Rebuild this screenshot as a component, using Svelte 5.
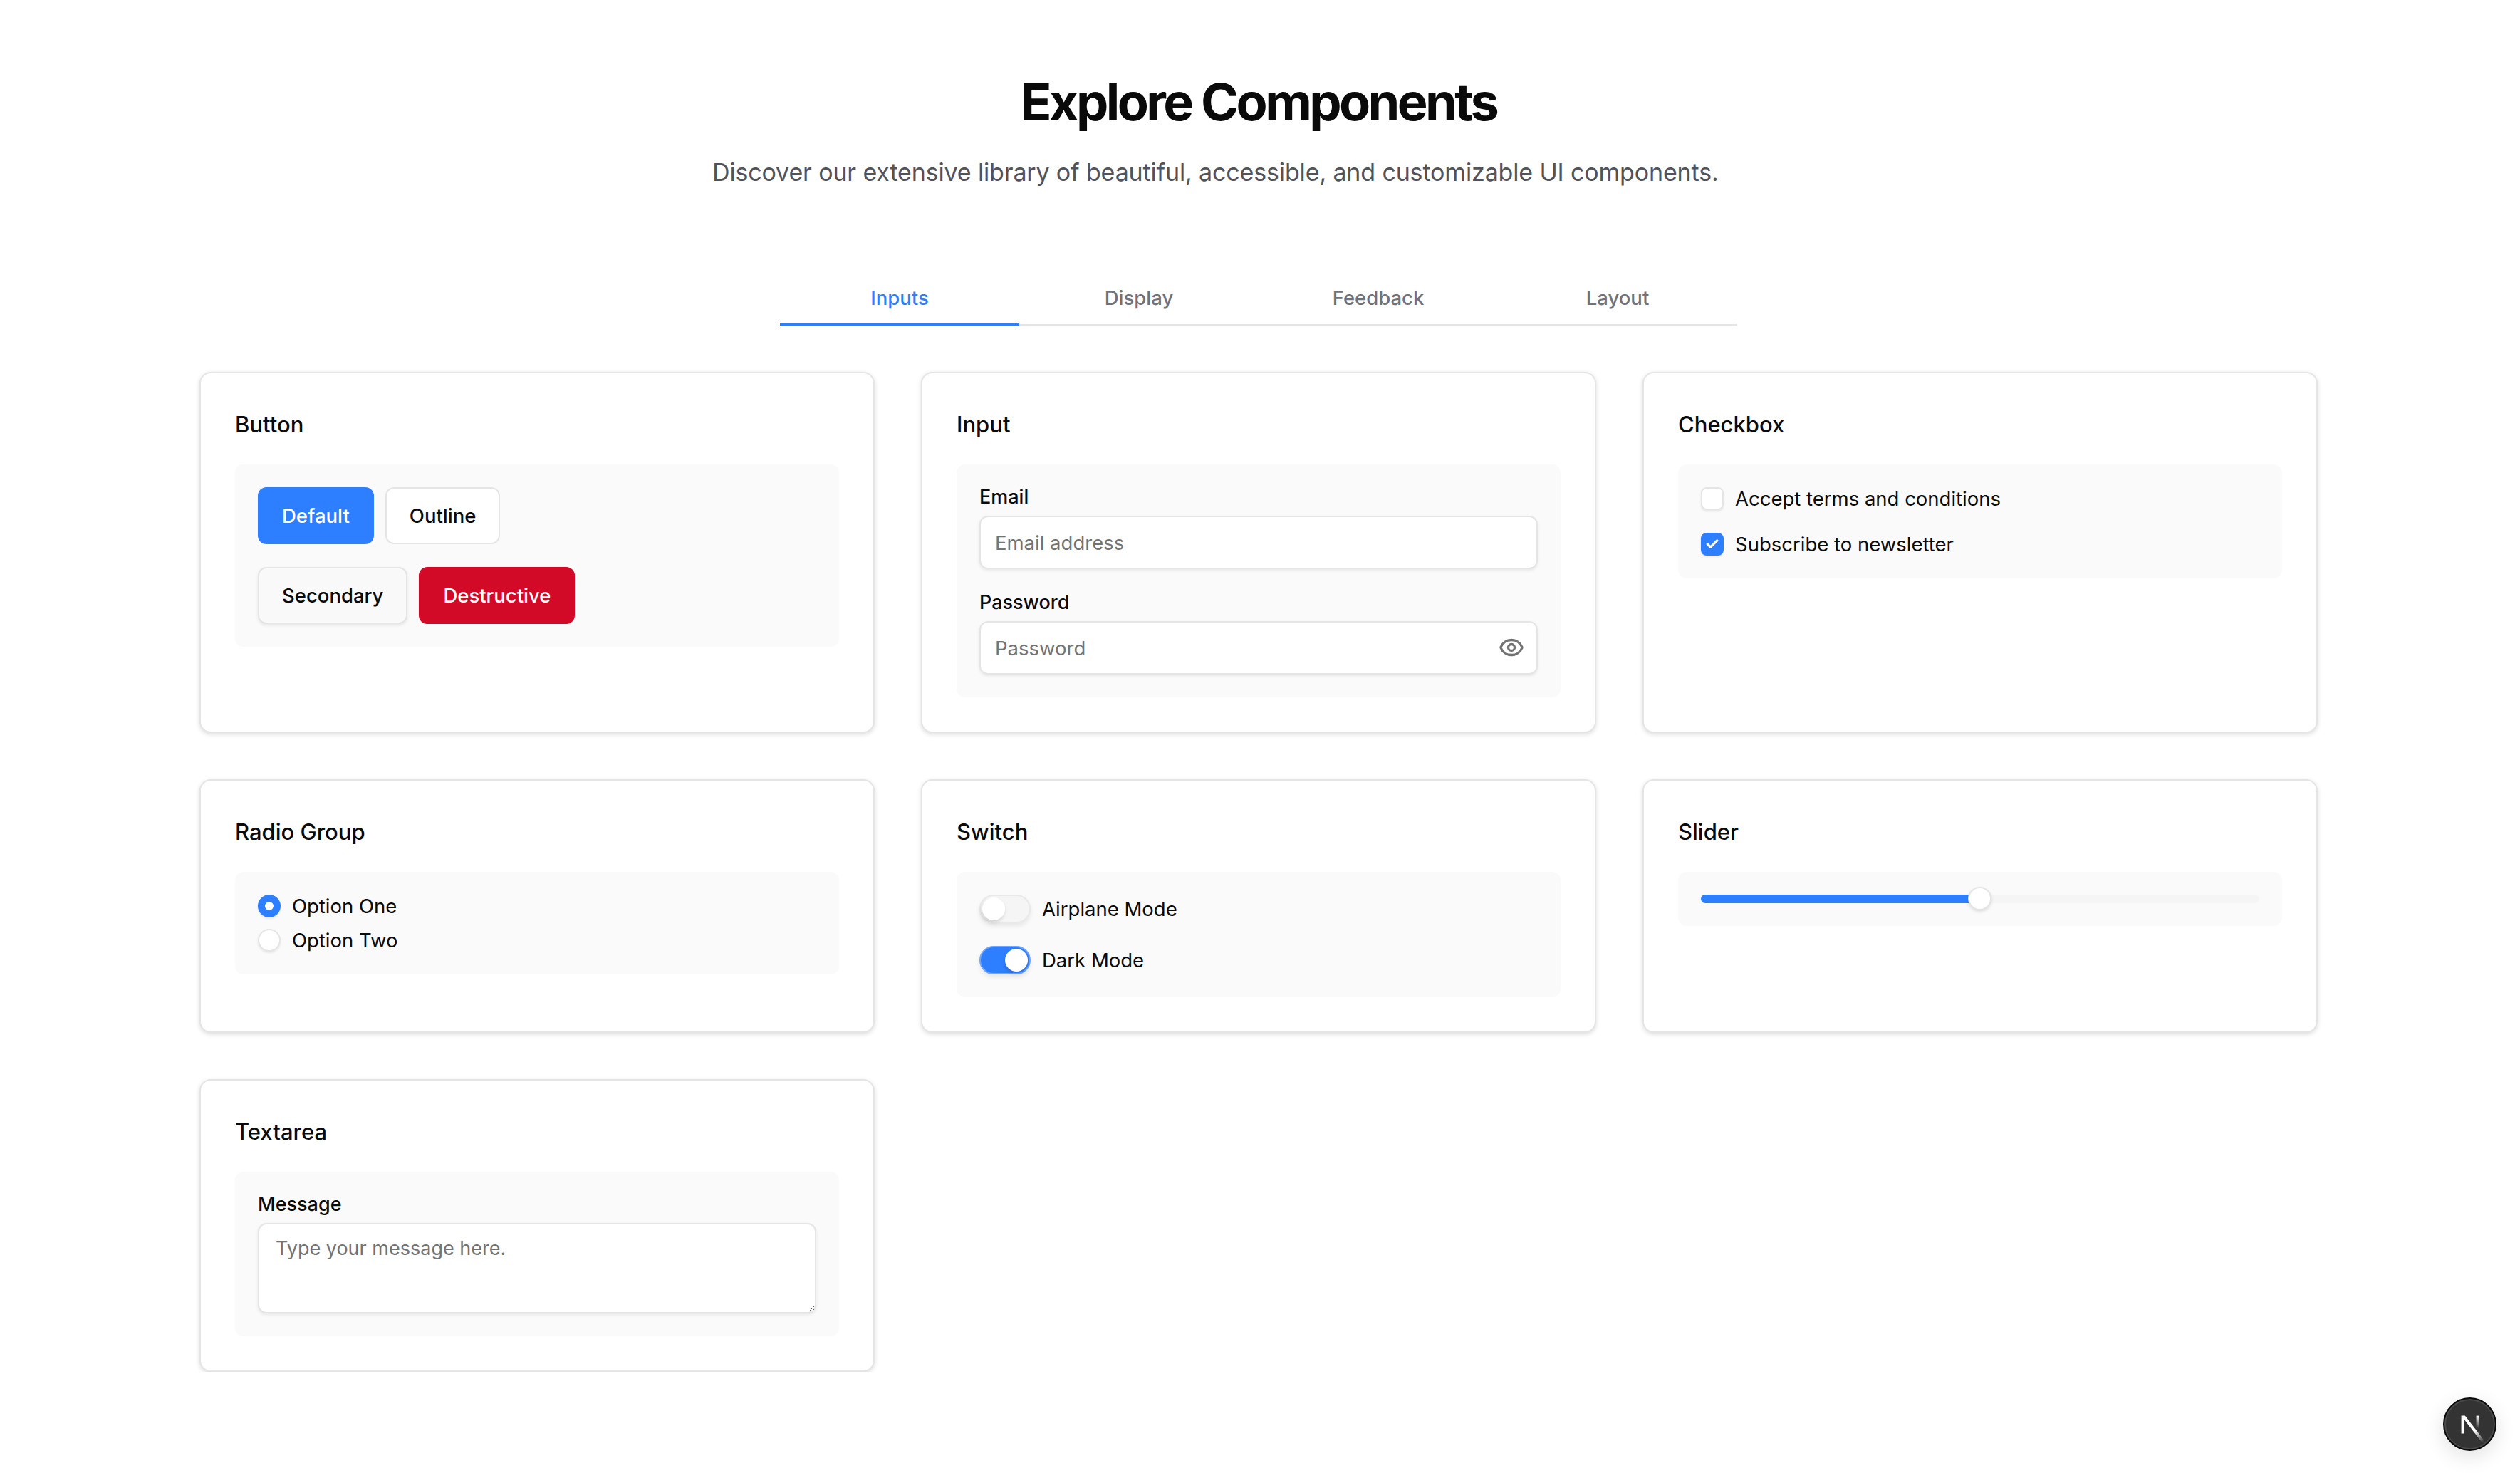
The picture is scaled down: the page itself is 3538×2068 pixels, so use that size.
<script>
    const tabs = ["Inputs", "Display", "Feedback", "Layout"];
    let activeTab = "Inputs";
</script>

<div class="page">
    <header class="intro">
        <h1>Explore Components</h1>
        <p>Discover our extensive library of beautiful, accessible, and customizable UI components.</p>
    </header>

    <div class="tabs">
        {#each tabs as tab}
            <button class="tab" class:active={tab == activeTab} on:click={() => (activeTab = tab)}>{tab}</button>
        {/each}
    </div>

    <div class="grid">
        <section class="card">
            <h3>Button</h3>
            <div class="panel buttons">
                <div class="btn-row">
                    <button class="btn default">Default</button>
                    <button class="btn outline">Outline</button>
                </div>
                <div class="btn-row">
                    <button class="btn secondary">Secondary</button>
                    <button class="btn destructive">Destructive</button>
                </div>
            </div>
        </section>

        <section class="card">
            <h3>Input</h3>
            <div class="panel fields">
                <div class="field">
                    <label for="email">Email</label>
                    <input id="email" class="input" type="text" placeholder="Email address" />
                </div>
                <div class="field">
                    <label for="password">Password</label>
                    <div class="password">
                        <input id="password" class="input" type="password" placeholder="Password" />
                        <svg class="eye" viewBox="0 0 24 24" fill="none" stroke="currentColor" stroke-width="2.2" stroke-linecap="round" stroke-linejoin="round">
                            <path d="M2.06 12.35a1 1 0 0 1 0-.7 10.75 10.75 0 0 1 19.88 0 1 1 0 0 1 0 .7 10.75 10.75 0 0 1-19.88 0" />
                            <circle cx="12" cy="12" r="3" />
                        </svg>
                    </div>
                </div>
            </div>
        </section>

        <section class="card">
            <h3>Checkbox</h3>
            <div class="panel checks">
                <div class="check-row">
                    <span class="checkbox"></span>
                    <span>Accept terms and conditions</span>
                </div>
                <div class="check-row">
                    <span class="checkbox checked">
                        <svg viewBox="0 0 24 24" fill="none" stroke="currentColor" stroke-width="4" stroke-linecap="round" stroke-linejoin="round">
                            <path d="M20 6 9 17l-5-5" />
                        </svg>
                    </span>
                    <span>Subscribe to newsletter</span>
                </div>
            </div>
        </section>

        <section class="card">
            <h3>Radio Group</h3>
            <div class="panel radios">
                <div class="radio-row">
                    <span class="radio selected"></span>
                    <span>Option One</span>
                </div>
                <div class="radio-row">
                    <span class="radio"></span>
                    <span>Option Two</span>
                </div>
            </div>
        </section>

        <section class="card">
            <h3>Switch</h3>
            <div class="panel switches">
                <div class="switch-row">
                    <span class="switch"><span class="thumb"></span></span>
                    <span>Airplane Mode</span>
                </div>
                <div class="switch-row">
                    <span class="switch on"><span class="thumb"></span></span>
                    <span>Dark Mode</span>
                </div>
            </div>
        </section>

        <section class="card">
            <h3>Slider</h3>
            <div class="panel slider-panel">
                <div class="track">
                    <div class="fill"></div>
                    <span class="handle"></span>
                </div>
            </div>
        </section>

        <section class="card">
            <h3>Textarea</h3>
            <div class="panel">
                <div class="field">
                    <label for="message">Message</label>
                    <textarea id="message" class="input area" placeholder="Type your message here."></textarea>
                </div>
            </div>
        </section>
    </div>
</div>

<button class="next-badge" aria-label="Open Next.js Dev Tools">
    <svg viewBox="0 0 180 180" fill="none">
        <defs>
            <linearGradient id="nextA" x1="109" y1="116.5" x2="144.5" y2="160.5" gradientUnits="userSpaceOnUse">
                <stop stop-color="#fff" />
                <stop offset="1" stop-color="#fff" stop-opacity="0" />
            </linearGradient>
            <linearGradient id="nextB" x1="121" y1="54" x2="120.8" y2="106" gradientUnits="userSpaceOnUse">
                <stop stop-color="#fff" />
                <stop offset="1" stop-color="#fff" stop-opacity="0" />
            </linearGradient>
        </defs>
        <path d="M149.5 157.5 69.1 54H54v72h12.1V69.4L140 164.8c3.3-2.2 6.5-4.7 9.5-7.3Z" fill="url(#nextA)" />
        <rect x="115" y="54" width="12" height="72" fill="url(#nextB)" />
    </svg>
</button>

<style>
    :global(body) {
        background-color: #ffffff;
        color: #0a0a0a;
        font-family: Inter, "Liberation Sans", sans-serif;
        overflow: hidden;
    }

    .page {
        width: 2974px;
        margin-left: 280px;
        padding-top: 100px;
        box-sizing: border-box;
    }

    .intro {
        text-align: center;
    }

    h1 {
        margin: 0;
        font-size: 72px;
        line-height: 86px;
        font-weight: 700;
        letter-spacing: -0.05em;
    }

    .intro p {
        width: 1412px;
        margin: 29px 0 0 720px;
        font-size: 34px;
        line-height: 54px;
        letter-spacing: -0.15px;
        color: #52525b;
        white-space: nowrap;
    }

    .tabs {
        display: grid;
        grid-template-columns: repeat(4, 336px);
        margin: 114px 0 0 815px;
        width: 1344px;
        height: 72px;
        border-bottom: 2px solid #e5e5e5;
    }

    .tab {
        height: 74px;
        padding: 0;
        background: none;
        border: none;
        border-bottom: 4px solid transparent;
        font: inherit;
        font-size: 27.5px;
        font-weight: 450;
        color: #71717a;
    }

    .tab.active {
        color: #2e7fff;
        border-bottom-color: #2e7fff;
    }

    .grid {
        display: grid;
        grid-template-columns: repeat(3, 948px);
        gap: 65px;
        margin-top: 65px;
    }

    .card {
        box-sizing: border-box;
        padding: 48px;
        background-color: #ffffff;
        border: 2px solid #e5e5e5;
        border-radius: 16px;
        box-shadow: 0 2px 6px rgba(0, 0, 0, 0.14);
    }

    h3 {
        margin: 0 0 32px;
        font-size: 31px;
        line-height: 48px;
        font-weight: 450;
    }

    .panel {
        padding: 32px;
        background-color: #fafafa;
        border-radius: 12px;
    }

    .buttons {
        display: flex;
        flex-direction: column;
        gap: 32px;
    }

    .fields {
        display: flex;
        flex-direction: column;
        gap: 33px;
    }

    .btn-row {
        display: flex;
        gap: 16px;
    }

    .btn {
        box-sizing: border-box;
        height: 80px;
        padding: 0 32px;
        border: 2px solid transparent;
        border-radius: 12px;
        font: inherit;
        font-size: 27.5px;
        font-weight: 450;
        color: #0a0a0a;
    }

    .default {
        background-color: #2e7fff;
        color: #ffffff;
    }

    .outline {
        background-color: #ffffff;
        border-color: #e5e5e5;
    }

    .secondary {
        background-color: #f9f9f9;
        border-color: #e5e5e5;
        box-shadow: 0 2px 4px rgba(0, 0, 0, 0.08);
    }

    .destructive {
        background-color: #d30a27;
        color: #ffffff;
    }

    .field {
        display: flex;
        flex-direction: column;
        gap: 12px;
    }

    label {
        font-size: 27px;
        line-height: 28px;
        font-weight: 450;
    }

    .input {
        display: block;
        box-sizing: border-box;
        width: 100%;
        height: 75px;
        padding: 0 20px;
        background-color: #ffffff;
        border: 2px solid #e5e5e5;
        border-radius: 12px;
        box-shadow: 0 2px 4px rgba(0, 0, 0, 0.08);
        font: inherit;
        font-size: 27.5px;
        outline: none;
    }

    .input::placeholder {
        color: #737373;
        opacity: 1;
    }

    .password {
        position: relative;
    }

    .eye {
        position: absolute;
        top: 19px;
        right: 19px;
        width: 36px;
        height: 36px;
        color: #737373;
    }

    .area {
        height: 127px;
        padding: 14px 23px;
        font-size: 27px;
        line-height: 40px;
        resize: vertical;
    }

    .checks {
        display: flex;
        flex-direction: column;
        gap: 32px;
    }

    .check-row,
    .radio-row,
    .switch-row {
        display: flex;
        align-items: center;
        font-size: 27.5px;
        font-weight: 400;
        line-height: 32px;
    }

    .check-row {
        gap: 16px;
    }

    .checkbox {
        display: flex;
        align-items: center;
        justify-content: center;
        box-sizing: border-box;
        width: 32px;
        height: 32px;
        background-color: #ffffff;
        border: 2px solid #e5e5e5;
        border-radius: 8px;
        box-shadow: 0 2px 3px rgba(0, 0, 0, 0.08);
    }

    .checkbox.checked {
        background-color: #2e7fff;
        border-color: #2e7fff;
        color: #ffffff;
    }

    .checkbox svg {
        width: 20px;
        height: 20px;
    }

    .radios {
        display: flex;
        flex-direction: column;
        gap: 16px;
    }

    .radio-row {
        gap: 16px;
    }

    .radio {
        box-sizing: border-box;
        width: 32px;
        height: 32px;
        background-color: #ffffff;
        border: 2px solid #e5e5e5;
        border-radius: 50%;
        box-shadow: 0 2px 3px rgba(0, 0, 0, 0.08);
    }

    .radio.selected {
        background-color: #ffffff;
        border: 10px solid #2e7fff;
    }

    .switches {
        display: flex;
        flex-direction: column;
        gap: 32px;
    }

    .switch-row {
        gap: 16px;
    }

    .switch {
        display: flex;
        align-items: center;
        box-sizing: border-box;
        width: 72px;
        height: 40px;
        padding: 0 2px;
        background-color: #f5f5f5;
        border: 2px solid #e9e9e9;
        border-radius: 20px;
        box-shadow: 0 4px 6px rgba(0, 0, 0, 0.08);
    }

    .thumb {
        width: 32px;
        height: 32px;
        background-color: #ffffff;
        border-radius: 50%;
        box-shadow: -1px 3px 5px rgba(0, 0, 0, 0.15);
    }

    .switch.on {
        justify-content: flex-end;
        background-color: #2e7fff;
        border-color: #6fa6fb;
    }

    .slider-panel {
        padding: 32px;
    }

    .track {
        position: relative;
        height: 12px;
        background-color: #f5f5f5;
        border-radius: 6px;
    }

    .fill {
        width: 50%;
        height: 100%;
        background-color: #2e7fff;
        border-radius: 6px 0 0 6px;
    }

    .handle {
        position: absolute;
        top: -11px;
        left: calc(50% - 17px);
        box-sizing: border-box;
        width: 33px;
        height: 33px;
        background-color: #ffffff;
        border: 2px solid #e5e5e5;
        border-radius: 50%;
        box-shadow: 0 2px 4px rgba(0, 0, 0, 0.12);
    }

    .next-badge {
        position: fixed;
        top: 1962px;
        left: 3430px;
        display: flex;
        align-items: center;
        justify-content: center;
        box-sizing: border-box;
        width: 75px;
        height: 75px;
        padding: 0;
        background-color: #333333;
        border: 2px solid #0a0a0a;
        border-radius: 50%;
        box-shadow: inset 0 0 0 2px #4a4a4a, 0 8px 28px rgba(0, 0, 0, 0.12);
    }

    .next-badge svg {
        width: 62px;
        height: 62px;
    }
</style>
